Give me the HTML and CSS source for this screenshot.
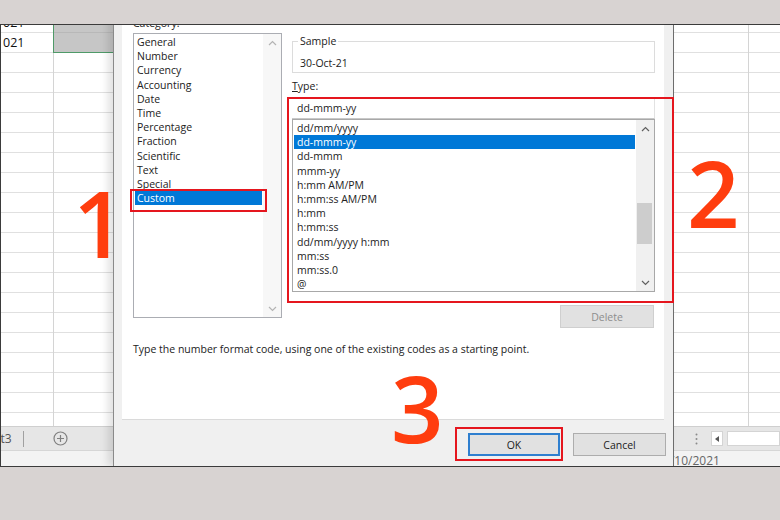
FILE: index.html
```html
<!DOCTYPE html>
<html lang="en">
<head>
    <meta charset="UTF-8">
    <title>Format Cells - Custom</title>
    <link rel="stylesheet" href="styles.css">
</head>
<body>
<div class="shot">
    <div class="screen">
        <div class="sheet">
            <div class="grid">
                <div class="rows">
                    <div class="col-a">
                        <div class="cell">021</div>
                        <div class="cell">021</div>
                    </div>
                    <div class="col-b">
                        <div class="cell"></div>
                        <div class="cell"></div>
                    </div>
                </div>
            </div>
            <div class="tabs">
                <span class="tab">Sheet3</span>
                <span class="tab-sep"></span>
                <svg class="add" width="15" height="15" viewBox="0 0 15 15"><circle cx="7.5" cy="7.5" r="6.5" fill="none" stroke="#808080" stroke-width="1.2"/><path d="M7.5 4v7M4 7.5h7" stroke="#808080" stroke-width="1.2"/></svg>
                <div class="hscroll">
                    <svg class="dots" width="3" height="12" viewBox="0 0 3 12"><circle cx="1.5" cy="1.5" r="1" fill="#8a8a8a"/><circle cx="1.5" cy="6" r="1" fill="#8a8a8a"/><circle cx="1.5" cy="10.5" r="1" fill="#8a8a8a"/></svg>
                    <span class="arrow-btn"><svg width="6" height="8" viewBox="0 0 6 8"><polygon points="5,1 1,4 5,7" fill="#555"/></svg></span>
                    <span class="hfield"></span>
                </div>
            </div>
            <div class="status">Thursday, 30/10/2021</div>
        </div>

        <div class="dialog">
            <div class="panel">
                <div class="cols">
                    <div class="left">
                        <div class="label">Category:</div>
                        <div class="listbox cat">
                            <ul class="items">
                                <li>General</li>
                                <li>Number</li>
                                <li>Currency</li>
                                <li>Accounting</li>
                                <li>Date</li>
                                <li>Time</li>
                                <li>Percentage</li>
                                <li>Fraction</li>
                                <li>Scientific</li>
                                <li>Text</li>
                                <li>Special</li>
                                <li class="on">Custom</li>
                            </ul>
                            <div class="vscroll">
                                <span class="chev"><svg width="9" height="6" viewBox="0 0 9 6"><polyline points="1,5 4.5,1.5 8,5" fill="none" stroke="#b4b4b4" stroke-width="1.2"/></svg></span>
                                <span class="track"></span>
                                <span class="chev"><svg width="9" height="6" viewBox="0 0 9 6"><polyline points="1,1 4.5,4.5 8,1" fill="none" stroke="#b4b4b4" stroke-width="1.2"/></svg></span>
                            </div>
                        </div>
                    </div>
                    <div class="right">
                        <fieldset class="sample">
                            <legend>Sample</legend>
                            <div>30-Oct-21</div>
                        </fieldset>
                        <div class="label type-label"><u>T</u>ype:</div>
                        <div class="type-input">dd-mmm-yy</div>
                        <div class="listbox types">
                            <ul class="items">
                                <li>dd/mm/yyyy</li>
                                <li class="on">dd-mmm-yy</li>
                                <li>dd-mmm</li>
                                <li>mmm-yy</li>
                                <li>h:mm AM/PM</li>
                                <li>h:mm:ss AM/PM</li>
                                <li>h:mm</li>
                                <li>h:mm:ss</li>
                                <li>dd/mm/yyyy h:mm</li>
                                <li>mm:ss</li>
                                <li>mm:ss.0</li>
                                <li>@</li>
                            </ul>
                            <div class="vscroll">
                                <span class="chev"><svg width="9" height="6" viewBox="0 0 9 6"><polyline points="1,5 4.5,1.5 8,5" fill="none" stroke="#606060" stroke-width="1.2"/></svg></span>
                                <span class="track"><span class="thumb"></span></span>
                                <span class="chev"><svg width="9" height="6" viewBox="0 0 9 6"><polyline points="1,1 4.5,4.5 8,1" fill="none" stroke="#606060" stroke-width="1.2"/></svg></span>
                            </div>
                        </div>
                        <button class="btn delete" disabled>Delete</button>
                    </div>
                </div>
                <p class="hint">Type the number format code, using one of the existing codes as a starting point.</p>
            </div>
            <div class="footer">
                <button class="btn ok">OK</button>
                <button class="btn">Cancel</button>
            </div>
        </div>
    </div>

    <!-- annotations drawn over the screenshot -->
    <div class="mark box1"></div>
    <div class="mark box2"></div>
    <div class="mark box3"></div>
    <span class="num n1">1</span>
    <span class="num n2">2</span>
    <span class="num n3">3</span>
</div>
</body>
</html>
```

FILE: styles.css
```css
* {
    box-sizing: border-box;
}
body {
    margin: 0;
    background: #d8d3d2;
    font-family: "Open Sans", "Noto Sans", sans-serif;
    font-size: 10.5px;
    color: #222;
}
.shot {
    position: relative;
    width: 780px;
    height: 520px;
    overflow: hidden;
}
.screen {
    position: relative;
    margin-top: 24px;
    height: 443px;
    border: 1px solid #3b3b3b;
    border-right: 0;
    overflow: hidden;
    background: #fff;
}

/* spreadsheet behind the dialog */
.sheet {
    display: flex;
    flex-direction: column;
    height: 100%;
}
.grid {
    flex: 1;
    background:
        linear-gradient(#d4d4d4, #d4d4d4) 52px 0 / 1px 100% no-repeat,
        linear-gradient(#d4d4d4, #d4d4d4) 112px 0 / 1px 100% no-repeat,
        linear-gradient(#d4d4d4, #d4d4d4) 747px 0 / 1px 100% no-repeat,
        repeating-linear-gradient(to bottom, transparent 0 19px, #e0e0e0 19px 20px) 0 -12px;
}
.rows {
    display: flex;
    margin-top: -12px;
}
.col-a {
    width: 52px;
}
.cell {
    height: 20px;
    line-height: 19px;
    padding-left: 2px;
    font-size: 12.5px;
    color: #111;
}
.col-b {
    width: 61px;
    border-left: 1px solid #4f9a68;
    border-bottom: 1px solid #4f9a68;
}
.col-b .cell {
    background: #c6c6c6;
    border-bottom: 1px solid #b8b8b8;
}
.col-b .cell:last-child {
    height: 19px;
    border-bottom: 0;
}
.tabs {
    height: 24px;
    display: flex;
    align-items: center;
    background: #e6e6e6;
    border-top: 1px solid #cfcfcf;
}
.tab {
    margin-left: -28px;
    font-size: 12px;
    color: #555;
}
.tab-sep {
    width: 1px;
    height: 16px;
    margin-left: 11px;
    background: #a0a0a0;
}
.add {
    margin-left: 29px;
}
.hscroll {
    margin-left: auto;
    display: flex;
    align-items: center;
}
.arrow-btn {
    width: 12px;
    height: 15px;
    margin-left: 13px;
    display: flex;
    align-items: center;
    justify-content: center;
    background: #fff;
    border: 1px solid #d4d4d4;
}
.hfield {
    width: 53px;
    height: 15px;
    margin-left: 4px;
    background: #fff;
    border: 1px solid #d4d4d4;
}
.status {
    height: 16px;
    padding: 2px 0 0 597px;
    line-height: 16px;
    background: #f3f3f3;
    border-top: 1px solid #d6d6d6;
    font-size: 12px;
    color: #666;
    white-space: nowrap;
}

/* Format Cells dialog */
.dialog {
    position: absolute;
    left: 112px;
    top: -17px;
    width: 561px;
    height: 458px;
    display: flex;
    flex-direction: column;
    background: #f0f0f0;
    border-left: 1px solid #8a8a8a;
    border-right: 1px solid #6d6d6d;
    box-shadow: -5px 0 8px rgba(0, 0, 0, 0.12);
}
.panel {
    margin: 0 9px 0 8px;
    height: 412px;
    padding: 8px 0 0 11px;
    background: #fff;
    border-bottom: 1px solid #dadada;
}
.cols {
    display: grid;
    grid-template-columns: 149px 363px;
    column-gap: 10px;
    align-items: start;
}
.label {
    height: 14px;
    line-height: 14px;
}
.listbox {
    display: flex;
    border: 1px solid #abadb3;
    background: #fff;
}
.listbox.cat {
    margin-top: 3px;
    height: 285px;
}
.items {
    list-style: none;
    margin: 0;
    padding: 1px 1px 0;
    flex: 1;
    overflow: hidden;
}
.items li {
    height: 14.2px;
    line-height: 14.2px;
    padding-left: 2px;
    white-space: nowrap;
}
.items li.on {
    background: #0078d7;
    color: #fff;
}
.vscroll {
    width: 18px;
    display: flex;
    flex-direction: column;
    background: #f7f7f7;
}
.chev {
    height: 17px;
    display: flex;
    align-items: center;
    justify-content: center;
}
.track {
    flex: 1;
}
.types .vscroll {
    background: #f0f0f0;
}
.thumb {
    display: block;
    height: 41px;
    margin: 66px 2px 0 1px;
    background: #cdcdcd;
}
.sample {
    margin: 18px 0 0;
    padding: 8px 7px 2px;
    border: 1px solid #dcdcdc;
    min-width: 0;
    line-height: 14px;
}
.sample legend {
    padding: 0 2px;
    margin-left: -2px;
}
.type-label {
    margin-top: 6px;
}
.type-input {
    margin-top: 5px;
    height: 21px;
    line-height: 20px;
    padding-left: 5px;
    border-bottom: 1px solid #c8c8c8;
    border-right: 1px solid #e2e2e2;
}
.listbox.types {
    height: 173px;
    border-color: #a8a8a8;
}
.types .items li {
    padding-left: 3px;
}
.btn {
    width: 93px;
    height: 23px;
    padding: 0;
    font: inherit;
    color: #222;
    background: #e1e1e1;
    border: 1px solid #adadad;
}
.btn.delete {
    display: block;
    width: 94px;
    margin: 13px 1px 0 auto;
    color: #8d8d8d;
    border-color: #cfcfcf;
}
.hint {
    margin: 14px 0 0;
    line-height: 14px;
}
.footer {
    display: flex;
    justify-content: flex-end;
    gap: 13px;
    padding: 13px 7px 0 0;
}
.btn.ok {
    width: 92px;
    border: 2px solid #2f7fcf;
}

/* red tutorial marks */
.mark {
    position: absolute;
    border: 2px solid #e5161e;
}
.box1 {
    left: 130px;
    top: 189px;
    width: 137px;
    height: 23px;
}
.box2 {
    left: 287px;
    top: 97px;
    width: 387px;
    height: 206px;
}
.box3 {
    left: 455px;
    top: 427px;
    width: 108px;
    height: 34px;
}
.num {
    position: absolute;
    font-family: "Open Sans", sans-serif;
    font-size: 92px;
    font-weight: 600;
    line-height: 66px;
    color: #ff3d0e;
}
.n1 {
    left: 73px;
    top: 190px;
}
.n2 {
    left: 687px;
    top: 160px;
}
.n3 {
    left: 391px;
    top: 375px;
}
```
